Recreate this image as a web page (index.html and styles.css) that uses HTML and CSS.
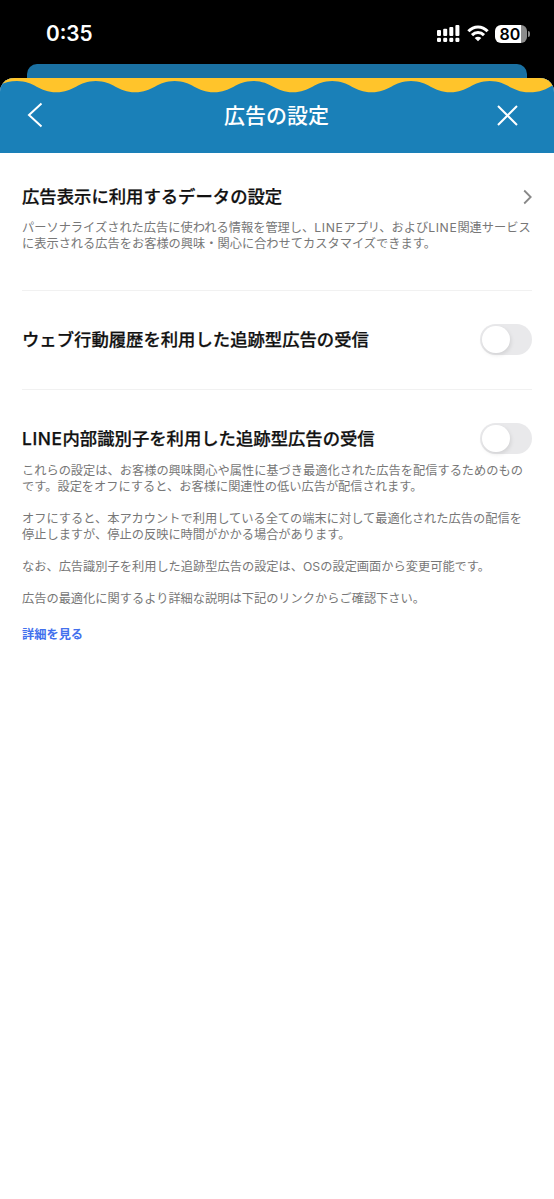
FILE: index.html
```
<!DOCTYPE html>
<html lang="ja">
<head>
  <meta charset="UTF-8" />
  <meta name="viewport" content="width=device-width, initial-scale=1.0"/>
  <title>広告の設定</title>
  <link rel="stylesheet" href="styles.css">
</head>
<body>

  <!-- Status Bar -->
  <div class="status-bar">
    <span class="time">0:35</span>
    <div class="status-icons">
      <svg class="signal" width="23" height="18" viewBox="0 0 23 18" fill="#fff">
        <rect x="0" y="6" width="4" height="6" rx="1"/>
        <rect x="6.2" y="4.7" width="4" height="7.3" rx="1"/>
        <rect x="12.3" y="3" width="4" height="9" rx="1"/>
        <rect x="18.4" y="1" width="4" height="11" rx="1"/>
        <rect x="0" y="13.7" width="4" height="4.3" rx="1.2"/>
        <rect x="6.2" y="13.7" width="4" height="4.3" rx="1.2"/>
        <rect x="12.3" y="13.7" width="4" height="4.3" rx="1.2"/>
        <rect x="18.4" y="13.7" width="4" height="4.3" rx="1.2"/>
      </svg>
      <svg class="wifi" width="22" height="17" viewBox="0 0 22 17" fill="none" stroke="#fff" stroke-width="3">
        <path d="M1.4 6.3 C6.8 .5 15.2 .5 20.6 6.3"/>
        <path d="M5 10.1 C8.4 6.6 13.6 6.6 17 10.1"/>
        <path d="M11 16.2 L7.7 12.9 C9.5 11.3 12.5 11.3 14.3 12.9 Z" fill="#fff" stroke="none"/>
      </svg>
      <div class="battery"><span>80</span></div>
      <div class="battery-cap"></div>
    </div>
  </div>

  <!-- Edge of the page behind the sheet -->
  <div class="back-sheet"></div>

  <div class="sheet">
    <header class="header">
      <svg class="wave" width="554" height="16" viewBox="0 0 554 16" fill="#ffc42b">
        <path d="M0 0 H554 V6.5 C546 11.5 540 14.3 529.2 14.3 C512 14.3 507 3 489.8 3 S467.6 14.3 450.4 14.3 S428.2 3 411 3 S388.8 14.3 371.6 14.3 S349.4 3 332.2 3 S310 14.3 292.8 14.3 S270.6 3 253.4 3 S231.2 14.3 214 14.3 S191.8 3 174.6 3 S152.4 14.3 135.2 14.3 S113 3 95.8 3 S73.6 14.3 56.4 14.3 S34.2 3 17 3 C10 3 5 4.5 0 7 Z"/>
      </svg>
      <div class="nav">
        <svg class="back" width="16" height="26" viewBox="0 0 16 26" fill="none" stroke="#fff" stroke-width="2">
          <path d="M14.5 1.5 L2 13 L14.5 24.5"/>
        </svg>
        <h1>広告の設定</h1>
        <svg class="close" width="21" height="21" viewBox="0 0 21 21" fill="none" stroke="#fff" stroke-width="2">
          <path d="M1 1 L20 20 M20 1 L1 20"/>
        </svg>
      </div>
    </header>

    <main class="settings">
      <section class="item item-data">
        <div class="item-head">
          <h2>広告表示に利用するデータの設定</h2>
          <svg class="chevron" width="9" height="16" viewBox="0 0 9 16" fill="none" stroke="#888" stroke-width="1.8">
            <path d="M1.2 1.5 L7.7 8 L1.2 14.5"/>
          </svg>
        </div>
        <p>パーソナライズされた広告に使われる情報を管理し、<span class="latin">LINE</span>アプリ、および<span class="latin">LINE</span>関連サービス<br>に表示される広告をお客様の興味・関心に合わせてカスタマイズできます。</p>
      </section>

      <section class="item item-web">
        <div class="item-head">
          <h2>ウェブ行動履歴を利用した追跡型広告の受信</h2>
          <div class="toggle"></div>
        </div>
      </section>

      <section class="item item-line">
        <div class="item-head">
          <h2><span class="latin">LINE</span>内部識別子を利用した追跡型広告の受信</h2>
          <div class="toggle"></div>
        </div>
        <p>これらの設定は、お客様の興味関心や属性に基づき最適化された広告を配信するためのもの<br>です。設定をオフにすると、お客様に関連性の低い広告が配信されます。</p>
        <p>オフにすると、本アカウントで利用している全ての端末に対して最適化された広告の配信を<br>停止しますが、停止の反映に時間がかかる場合があります。</p>
        <p>なお、広告識別子を利用した追跡型広告の設定は、OSの設定画面から変更可能です。</p>
        <p>広告の最適化に関するより詳細な説明は下記のリンクからご確認下さい。</p>
        <a class="more">詳細を見る</a>
      </section>
    </main>
  </div>

</body>
</html>
```
FILE: styles.css
```
* {
  box-sizing: border-box;
}

body {
  margin: 0;
  min-height: 1199px;
  display: flex;
  flex-direction: column;
  background: #000;
  font-family: Inter, 'Noto Sans CJK JP', sans-serif;
}

h1, h2, p {
  margin: 0;
}

svg {
  display: block;
  flex: none;
}

.status-bar {
  height: 64px;
  padding: 3px 24px 0 46px;
  display: flex;
  align-items: center;
  justify-content: space-between;
  color: #fff;
}

.time {
  font-size: 20.8px;
  line-height: 24px;
  font-weight: 600;
}

.status-icons {
  display: flex;
  align-items: center;
}

.signal {
  margin-top: -1px;
}

.wifi {
  margin: -1px 6px 0 7px;
}

.battery {
  width: 32px;
  height: 18px;
  padding-right: 2px;
  border-radius: 6px;
  background: linear-gradient(to right, #fff 26px, #8c8c8c 26px);
  color: #000;
  text-align: center;
  font-size: 16px;
  line-height: 18px;
  font-weight: 600;
}

.battery-cap {
  width: 2px;
  height: 6px;
  margin-left: 1px;
  border-radius: 0 2px 2px 0;
  background: #8c8c8c;
}

.back-sheet {
  height: 14px;
  margin: 0 27px;
  border-radius: 10px 10px 0 0;
  background: #1a71a3;
}

.sheet {
  flex: 1;
  overflow: hidden;
  border-radius: 14px 14px 0 0;
  background: #fff;
}

.header {
  height: 75px;
  background: #1a80b8;
}

.nav {
  height: 43px;
  padding: 0 36px 0 27px;
  display: grid;
  grid-template-columns: 1fr auto 1fr;
  align-items: center;
  color: #fff;
}

.nav h1 {
  padding-right: 1px;
  margin-left: 9px;
  font-size: 21px;
  line-height: 26px;
  font-weight: 500;
}

.back {
  margin-top: -1px;
}

.close {
  justify-self: end;
}

.settings {
  padding: 0 22px;
}

.item + .item {
  border-top: 1px solid #f1f1f1;
}

.item-data {
  height: 137px;
  padding-top: 32px;
}

.item-web {
  height: 99px;
  padding-top: 33px;
}

.item-line {
  padding-top: 33px;
}

.item-head {
  display: flex;
  align-items: center;
  justify-content: space-between;
}

.item-head h2 {
  font-size: 17.35px;
  line-height: 24px;
  font-weight: 500;
  -webkit-text-stroke: 0.25px;
  color: #111;
  white-space: nowrap;
}

.item p {
  font-size: 12.22px;
  line-height: 16.1px;
  color: #777;
  white-space: nowrap;
}

.latin {
  letter-spacing: 0.6px;
}

.item-data p {
  margin-top: 11px;
}

.item-line p {
  margin-bottom: 16px;
}

.item-line .item-head {
  margin-bottom: 9px;
}

.chevron {
  margin-top: -1px;
}

.toggle {
  width: 52px;
  height: 31px;
  padding: 2px;
  border-radius: 16px;
  background: #e9e9eb;
}

.toggle::before {
  content: "";
  display: block;
  width: 28px;
  height: 27px;
  border-radius: 14px;
  background: #fff;
  box-shadow: 1px 2px 4px rgba(0, 0, 0, 0.1);
}

.more {
  display: block;
  margin-top: 19px;
  font-size: 12.22px;
  line-height: 16px;
  font-weight: 700;
  color: #4270ed;
}
```
